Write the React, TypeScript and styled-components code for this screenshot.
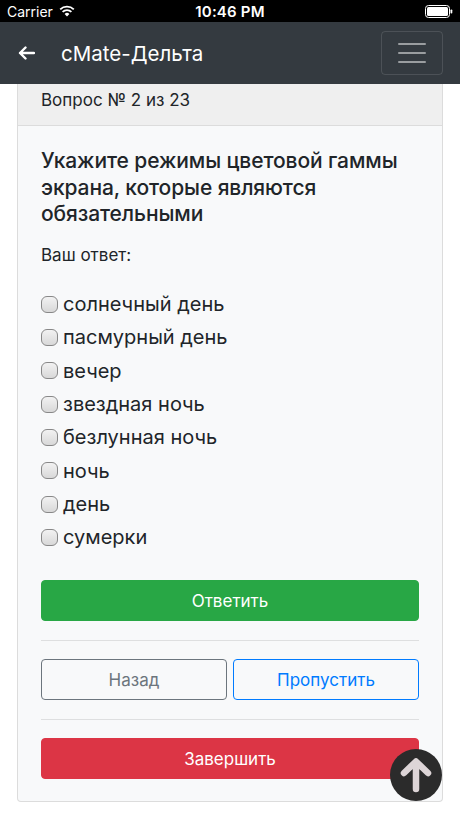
import React from "react";
import styled, { createGlobalStyle } from "styled-components";

const Global = createGlobalStyle`
  html, body { margin: 0; padding: 0; background: #ffffff; }
  body { font-family: Inter, "Noto Sans", "Liberation Sans", sans-serif; color: #212529; -webkit-font-smoothing: antialiased; }
  * { box-sizing: border-box; }
`;

const Screen = styled.div`
  width: 460px;
  height: 818px;
  position: relative;
  overflow: hidden;
  background: #fff;
`;

const StatusBar = styled.div`
  height: 22px;
  background: #000;
  color: #fff;
  display: grid;
  grid-template-columns: 1fr auto 1fr;
  align-items: center;
  padding: 0 7px;
  font-size: 14px;
`;

const StatusLeft = styled.div`
  display: flex;
  align-items: center;
  gap: 6px;
`;

const Time = styled.div`
  font-weight: 600;
  font-size: 15px;
  letter-spacing: 0.2px;
`;

const StatusRight = styled.div`
  display: flex;
  justify-content: flex-end;
  align-items: center;
`;

const NavBar = styled.div`
  height: 62px;
  background: #343a40;
  display: flex;
  align-items: center;
  padding: 0 18px 0 18px;
  color: #fff;
`;

const BackBtn = styled.div`
  width: 17px;
  display: flex;
  align-items: center;
`;

const Title = styled.div`
  font-size: 20.5px;
  margin-left: 26px;
  flex: 1;
`;

const Burger = styled.div`
  width: 62px;
  height: 44px;
  border: 1px solid rgba(255, 255, 255, 0.12);
  border-radius: 4px;
  display: flex;
  flex-direction: column;
  justify-content: center;
  align-items: center;
  gap: 7px;
  margin-right: -1px;
`;

const BurgerLine = styled.span`
  width: 28px;
  height: 2px;
  background: rgba(255, 255, 255, 0.5);
  border-radius: 1px;
`;

const Content = styled.div`
  padding: 0 17px;
`;

const Card = styled.div`
  background: #f8f9fa;
  border: 1px solid #dcdcdc;
  border-top: none;
  border-radius: 0 0 4px 4px;
`;

const CardHeader = styled.div`
  height: 42px;
  background: #efefef;
  border-bottom: 1px solid #dcdcdc;
  padding: 4px 23px 0;
  font-size: 17px;
  line-height: 24px;
`;

const CardBody = styled.div`
  padding: 22px 23px 22px;
  display: flex;
  flex-direction: column;
`;

const Question = styled.div`
  font-size: 21px;
  font-weight: 500;
  line-height: 26.5px;
  margin-bottom: 15px;
  letter-spacing: -0.1px;
`;

const Label = styled.div`
  font-size: 17px;
  line-height: 24px;
  margin-bottom: 21px;
`;

const Options = styled.div`
  display: flex;
  flex-direction: column;
  margin-bottom: 26px;
`;

const Option = styled.label`
  height: 33.33px;
  display: flex;
  align-items: center;
  font-size: 20px;
`;

const Box = styled.span`
  width: 17px;
  height: 17px;
  border: 1px solid #888;
  border-radius: 6px;
  background: linear-gradient(#f2f2f2, #d8d8d8);
  margin-right: 5px;
  flex: none;
`;

const Button = styled.div<{ $variant: "success" | "danger" | "secondary" | "primary" }>`
  height: 41px;
  border-radius: 4px;
  display: flex;
  align-items: center;
  justify-content: center;
  font-size: 17px;
  ${({ $variant }) =>
    $variant === "success"
      ? "background:#28a745;color:#fff;border:1px solid #28a745;"
      : $variant === "danger"
      ? "background:#dc3545;color:#fff;border:1px solid #dc3545;"
      : $variant === "secondary"
      ? "background:transparent;color:#6c757d;border:1px solid #6c757d;"
      : "background:transparent;color:#007bff;border:1px solid #007bff;"}
`;

const Divider = styled.hr`
  border: none;
  border-top: 1px solid rgba(0, 0, 0, 0.1);
  margin: 19px 0 18px;
`;

const Row = styled.div`
  display: grid;
  grid-template-columns: 1fr 1fr;
  gap: 6px;
`;

const ScrollTop = styled.div`
  position: absolute;
  left: 390px;
  top: 749px;
  width: 52px;
  height: 52px;
  border-radius: 50%;
  background: #2b2b2b;
  display: flex;
  align-items: center;
  justify-content: center;
`;

const options = [
  "солнечный день",
  "пасмурный день",
  "вечер",
  "звездная ночь",
  "безлунная ночь",
  "ночь",
  "день",
  "сумерки",
];

export default function App() {
  return (
    <Screen>
      <Global />
      <StatusBar>
        <StatusLeft>
          <span>Carrier</span>
          <svg width="16" height="12" viewBox="0 0 16 12">
            <path d="M8 11.5 L5.6 8.9 A3.5 3.5 0 0 1 10.4 8.9 Z" fill="#fff" />
            <path d="M3.6 6.9 A6.3 6.3 0 0 1 12.4 6.9" stroke="#fff" strokeWidth="1.8" fill="none" />
            <path d="M1.2 4.4 A9.8 9.8 0 0 1 14.8 4.4" stroke="#fff" strokeWidth="1.8" fill="none" />
          </svg>
        </StatusLeft>
        <Time>10:46 PM</Time>
        <StatusRight>
          <svg width="28" height="13" viewBox="0 0 28 13">
            <rect x="0.5" y="0.5" width="24" height="12" rx="3" fill="none" stroke="#fff" strokeWidth="1" />
            <rect x="2" y="2" width="21" height="9" rx="1.5" fill="#fff" />
            <rect x="25.5" y="4.5" width="1.8" height="4" rx="0.8" fill="#fff" />
          </svg>
        </StatusRight>
      </StatusBar>
      <NavBar>
        <BackBtn>
          <svg width="17" height="14" viewBox="0 0 17 14">
            <path d="M16 7 H2 M7.5 1.5 L2 7 L7.5 12.5" stroke="#fff" strokeWidth="2.4" fill="none" strokeLinecap="round" strokeLinejoin="round" />
          </svg>
        </BackBtn>
        <Title>cMate-Дельта</Title>
        <Burger>
          <BurgerLine />
          <BurgerLine />
          <BurgerLine />
        </Burger>
      </NavBar>
      <Content>
        <Card>
          <CardHeader>Вопрос № 2 из 23</CardHeader>
          <CardBody>
            <Question>Укажите режимы цветовой гаммы экрана, которые являются обязательными</Question>
            <Label>Ваш ответ:</Label>
            <Options>
              {options.map((o) => (
                <Option key={o}>
                  <Box />
                  {o}
                </Option>
              ))}
            </Options>
            <Button $variant="success">Ответить</Button>
            <Divider />
            <Row>
              <Button $variant="secondary">Назад</Button>
              <Button $variant="primary">Пропустить</Button>
            </Row>
            <Divider />
            <Button $variant="danger">Завершить</Button>
          </CardBody>
        </Card>
      </Content>
      <ScrollTop>
        <svg width="34" height="36" viewBox="0 0 34 36">
          <path d="M17 32 V5 M5 16 L17 4.5 L29 16" stroke="#ddd5d7" strokeWidth="6.5" fill="none" strokeLinecap="round" strokeLinejoin="round" />
        </svg>
      </ScrollTop>
    </Screen>
  );
}
